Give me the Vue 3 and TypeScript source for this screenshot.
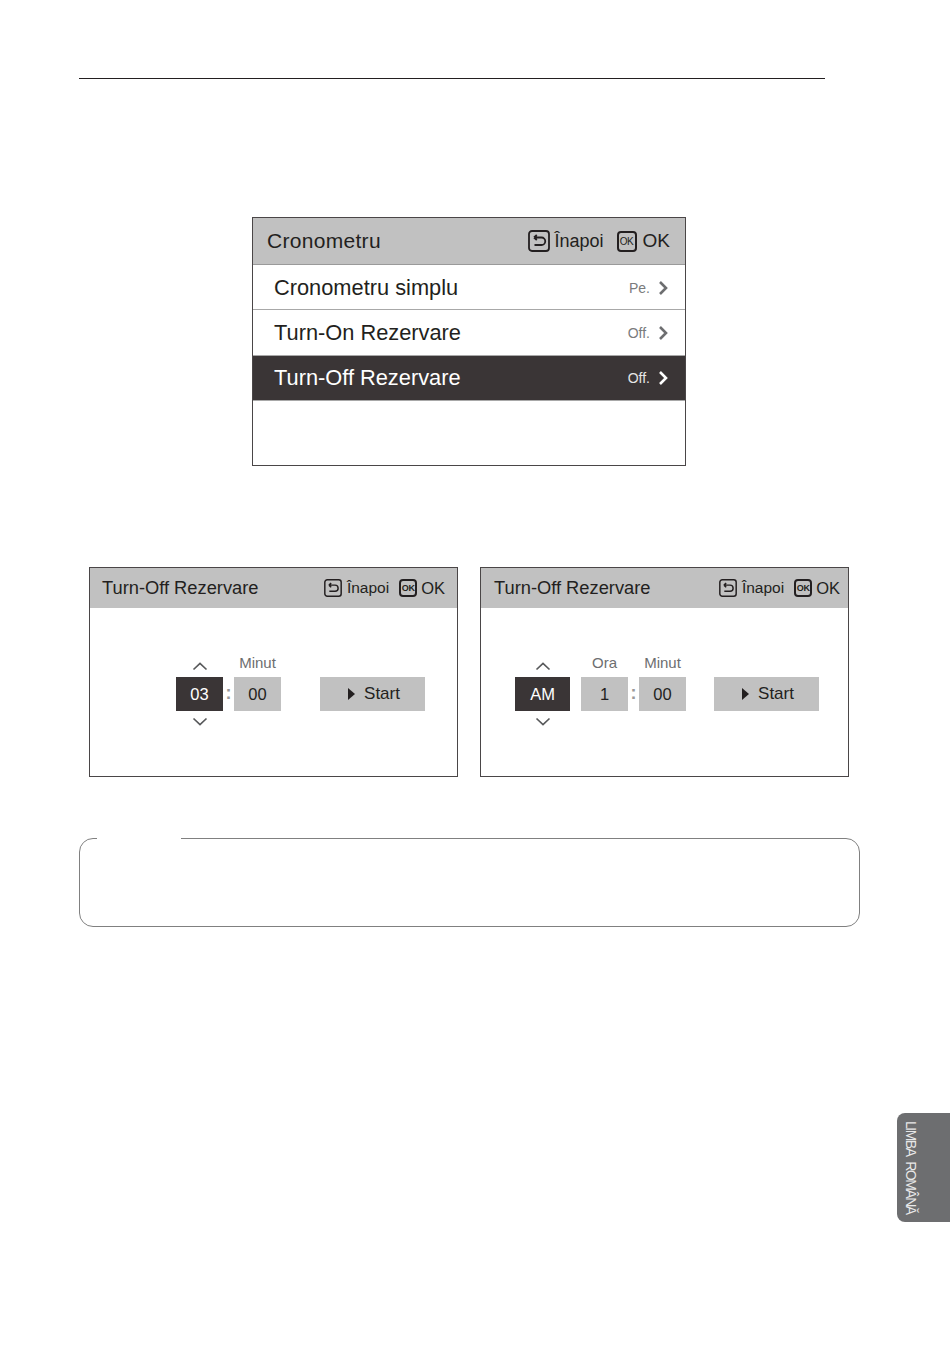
<script setup lang="ts">
interface Field {
  label?: string
  value: string
  active?: boolean
  wide?: boolean
  colonAfter?: boolean
  gapAfter?: number
}

interface Panel {
  id: string
  pad: number
  startGap: number
  headPad: string
  fields: Field[]
}

const rows = [
  { name: 'Cronometru simplu', state: 'Pe.', selected: false, height: 45 },
  { name: 'Turn-On Rezervare', state: 'Off.', selected: false, height: 46 },
  { name: 'Turn-Off Rezervare', state: 'Off.', selected: true, height: 45 },
]

const panels: Panel[] = [
  {
    id: 'a',
    pad: 86,
    startGap: 39,
    headPad: '0 12px 0 12px',
    fields: [
      { value: '03', active: true, colonAfter: true },
      { label: 'Minut', value: '00' },
    ],
  },
  {
    id: 'b',
    pad: 34,
    startGap: 28,
    headPad: '0 8px 0 13px',
    fields: [
      { value: 'AM', active: true, wide: true, gapAfter: 11 },
      { label: 'Ora', value: '1', colonAfter: true },
      { label: 'Minut', value: '00' },
    ],
  },
]
</script>

<template>
  <div class="page">
    <div class="top-rule"></div>

    <section class="menu">
      <header class="menu-head">
        <span class="menu-title">Cronometru</span>
        <span class="menu-actions">
          <svg class="back-icon big" viewBox="0 0 22 22">
            <rect x="1" y="1" width="20" height="20" rx="3" />
            <path d="M6 7.5H13.5A3.7 3.7 0 0 1 13.5 15H6.5M6 7.5L8.8 5M6 7.5L8.8 10" />
          </svg>
          <span class="act-text">Înapoi</span>
          <span class="ok-icon big">OK</span>
          <span class="act-text ok-text">OK</span>
        </span>
      </header>
      <div
        v-for="row in rows"
        :key="row.name"
        class="menu-row"
        :class="{ selected: row.selected }"
        :style="{ height: row.height + 'px' }"
      >
        <span class="row-name">{{ row.name }}</span>
        <span class="row-state">{{ row.state }}</span>
        <svg class="row-arrow" viewBox="0 0 10 16">
          <path d="M2 2L8 8L2 14" />
        </svg>
      </div>
    </section>

    <div class="panels">
      <section v-for="panel in panels" :key="panel.id" class="panel">
        <header class="panel-head" :style="{ padding: panel.headPad }">
          <span class="panel-title">Turn-Off Rezervare</span>
          <span class="panel-actions">
            <svg class="back-icon small" viewBox="0 0 22 22">
              <rect x="1" y="1" width="20" height="20" rx="3" />
              <path d="M6 7.5H13.5A3.7 3.7 0 0 1 13.5 15H6.5M6 7.5L8.8 5M6 7.5L8.8 10" />
            </svg>
            <span class="panel-back">Înapoi</span>
            <span class="ok-icon small">OK</span>
            <span class="panel-ok">OK</span>
          </span>
        </header>
        <div class="panel-body" :style="{ paddingLeft: panel.pad + 'px' }">
          <template v-for="field in panel.fields" :key="field.value">
            <div class="field" :class="{ wide: field.wide }">
              <div class="field-top">
                <span v-if="field.label" class="field-label">{{ field.label }}</span>
                <svg v-else class="chev" viewBox="0 0 16 10"><path d="M1.5 8.5L8 2.5L14.5 8.5" /></svg>
              </div>
              <div class="field-box" :class="{ active: field.active }">{{ field.value }}</div>
              <div class="field-bottom">
                <svg v-if="field.active" class="chev" viewBox="0 0 16 10"><path d="M1.5 1.5L8 7.5L14.5 1.5" /></svg>
              </div>
            </div>
            <span v-if="field.colonAfter" class="colon">:</span>
            <span v-if="field.gapAfter" :style="{ width: field.gapAfter + 'px' }"></span>
          </template>
          <div class="start" :style="{ marginLeft: panel.startGap + 'px' }">
            <span class="start-tri"></span>
            <span>Start</span>
          </div>
        </div>
      </section>
    </div>

    <div class="note"></div>

    <aside class="lang-tab"><span>LIMBA ROMÂNĂ</span></aside>
  </div>
</template>

<style>
html,
body {
  margin: 0;
  background: #fff;
}
</style>

<style scoped>
.page {
  width: 950px;
  height: 1346px;
  padding-top: 78px;
  box-sizing: border-box;
  overflow: hidden;
  background: #fff;
  color: #231f20;
  font-family: "Liberation Sans", Arial, sans-serif;
}

.top-rule {
  width: 746px;
  height: 1px;
  margin-left: 79px;
  background: #231f20;
}

.menu {
  width: 434px;
  height: 249px;
  box-sizing: border-box;
  margin: 138px 0 0 252px;
  border: 1px solid #4a4647;
}

.menu-head {
  display: flex;
  align-items: center;
  justify-content: space-between;
  height: 46px;
  padding: 0 15px 0 14px;
  background: #c1c1c1;
  border-bottom: 1px solid #9a9a9a;
}

.menu-title {
  font-size: 21px;
  letter-spacing: 0.3px;
}

.menu-actions,
.panel-actions {
  display: flex;
  align-items: center;
}

.act-text {
  margin-left: 5px;
  font-size: 18px;
}

.ok-text {
  margin-left: 6px;
  font-size: 19px;
}

.back-icon {
  display: block;
  fill: none;
  stroke: #231f20;
  stroke-width: 1.8;
}

.back-icon.big {
  width: 22px;
  height: 22px;
}

.back-icon.small {
  width: 18px;
  height: 18px;
}

.ok-icon {
  display: flex;
  align-items: center;
  justify-content: center;
  box-sizing: border-box;
  border: 2px solid #231f20;
  border-radius: 4px;
  letter-spacing: -0.4px;
}

.ok-icon.big {
  width: 20px;
  height: 21px;
  margin-left: 13px;
  font-size: 10px;
}

.ok-icon.small {
  width: 18px;
  height: 18px;
  margin-left: 10px;
  font-size: 9px;
  font-weight: 700;
}

.menu-row {
  display: flex;
  align-items: center;
  box-sizing: border-box;
  padding: 0 17px 0 21px;
  border-bottom: 1px solid #a8a8a8;
  font-size: 21.8px;
}

.menu-row:first-of-type {
  padding-top: 2px;
}

.menu-row.selected {
  background: #3a3536;
  color: #fff;
}

.row-name {
  flex: 1;
}

.row-state {
  font-size: 14px;
  color: #7a7b7d;
}

.selected .row-state {
  color: #e6e6e6;
}

.row-arrow {
  width: 10px;
  height: 16px;
  margin-left: 8px;
  fill: none;
  stroke: #6d6e70;
  stroke-width: 2.6;
}

.selected .row-arrow {
  stroke: #fff;
}

.panels {
  display: flex;
  gap: 22px;
  margin: 101px 0 0 89px;
}

.panel {
  width: 369px;
  height: 210px;
  box-sizing: border-box;
  border: 1px solid #4a4647;
}

.panel-head {
  display: flex;
  align-items: center;
  justify-content: space-between;
  height: 40px;
  background: #c1c1c1;
}

.panel-title {
  font-size: 18.3px;
}

.panel-back {
  margin-left: 5px;
  font-size: 15.5px;
}

.panel-ok {
  margin-left: 4px;
  font-size: 16.5px;
}

.panel-body {
  display: flex;
  align-items: flex-start;
  padding-top: 46px;
}

.field {
  width: 47px;
}

.field.wide {
  width: 55px;
}

.field-top,
.field-bottom {
  display: flex;
  justify-content: center;
  height: 23px;
  box-sizing: border-box;
}

.field-top {
  align-items: flex-end;
  padding-bottom: 6px;
}

.field-bottom {
  align-items: flex-start;
  padding-top: 6px;
}

.field-label {
  font-size: 15px;
  color: #6d6e70;
}

.chev {
  width: 16px;
  height: 10px;
  fill: none;
  stroke: #58595b;
  stroke-width: 1.7;
}

.field-box {
  display: flex;
  align-items: center;
  justify-content: center;
  height: 34px;
  background: #c1c1c1;
  font-size: 16.5px;
}

.field-box.active {
  background: #3a3536;
  color: #fff;
}

.colon {
  width: 11px;
  margin-top: 23px;
  line-height: 32px;
  text-align: center;
  font-size: 18px;
  font-weight: 700;
  color: #9a9a9a;
}

.start {
  display: flex;
  align-items: center;
  justify-content: center;
  gap: 9px;
  width: 105px;
  height: 34px;
  margin-top: 23px;
  padding-left: 3px;
  box-sizing: border-box;
  background: #c1c1c1;
  font-size: 17px;
}

.start-tri {
  width: 0;
  height: 0;
  border-top: 6px solid transparent;
  border-bottom: 6px solid transparent;
  border-left: 7px solid #231f20;
}

.note {
  position: relative;
  width: 781px;
  height: 89px;
  box-sizing: border-box;
  margin: 61px 0 0 79px;
  border: 1px solid #808080;
  border-radius: 14px;
}

/* break in the top border where the note's heading sat */
.note::before {
  content: "";
  position: absolute;
  top: -2px;
  left: 17px;
  width: 84px;
  height: 4px;
  background: #fff;
}

.lang-tab {
  display: flex;
  align-items: center;
  width: 53px;
  height: 109px;
  box-sizing: border-box;
  margin: 186px 0 0 897px;
  padding-left: 6px;
  background: #6d6e70;
  border-radius: 8px 0 0 8px;
  color: #e8e8e8;
  font-size: 14px;
  letter-spacing: -1.5px;
  word-spacing: 4px;
}

.lang-tab span {
  writing-mode: vertical-rl;
  white-space: nowrap;
}
</style>
